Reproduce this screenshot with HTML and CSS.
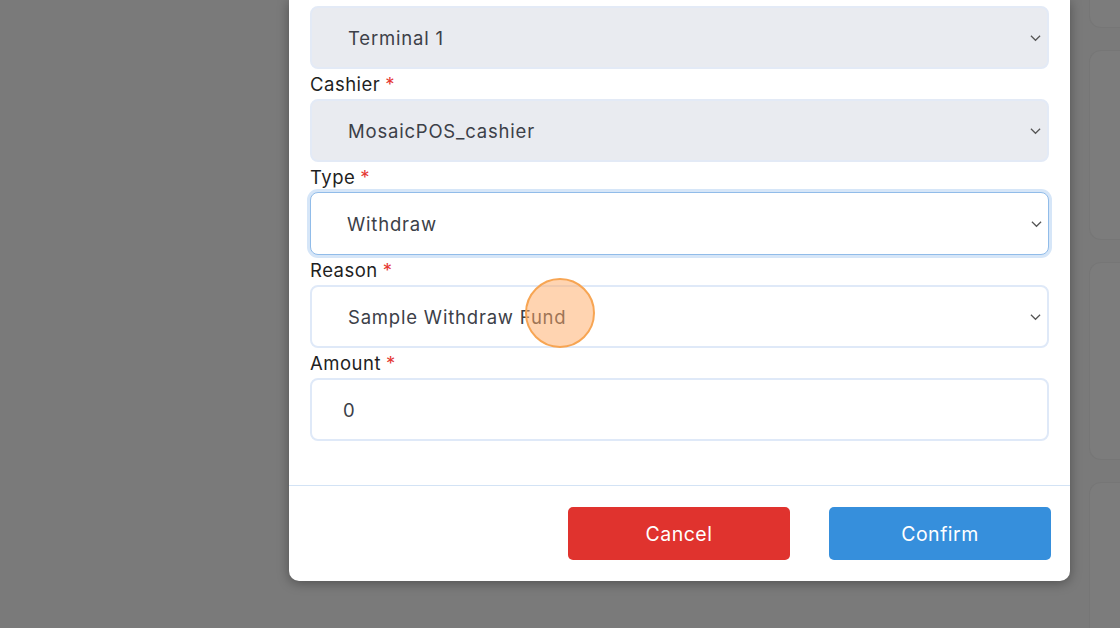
FILE: index.html
```html
<!DOCTYPE html>
<html lang="en">
<head>
  <meta charset="UTF-8">
  <title>Cash Movement</title>
  <link rel="stylesheet" href="styles.css">
</head>
<body>
  <div class="page">
    <div class="gutter"></div>

    <div class="modal">
      <div class="modal-body">
        <div class="field disabled">
          <span>Terminal 1</span>
          <svg class="chev" viewBox="0 0 12 8"><path d="M1 1.5l5 5 5-5"/></svg>
        </div>

        <div class="label">Cashier <span class="req">*</span></div>
        <div class="field disabled">
          <span>MosaicPOS_cashier</span>
          <svg class="chev" viewBox="0 0 12 8"><path d="M1 1.5l5 5 5-5"/></svg>
        </div>

        <div class="label">Type <span class="req">*</span></div>
        <div class="field focus">
          <span>Withdraw</span>
          <svg class="chev" viewBox="0 0 12 8"><path d="M1 1.5l5 5 5-5"/></svg>
        </div>

        <div class="label">Reason <span class="req">*</span></div>
        <div class="field">
          <span>Sample Withdraw Fund</span>
          <svg class="chev" viewBox="0 0 12 8"><path d="M1 1.5l5 5 5-5"/></svg>
          <div class="click-dot"></div>
        </div>

        <div class="label">Amount <span class="req">*</span></div>
        <div class="field input">
          <span>0</span>
        </div>
      </div>

      <div class="modal-footer">
        <button class="btn cancel">Cancel</button>
        <button class="btn confirm">Confirm</button>
      </div>
    </div>

    <div class="side">
      <div class="card c1"></div>
      <div class="card c2"></div>
      <div class="card c3"></div>
      <div class="card c4"></div>
    </div>
  </div>
</body>
</html>
```

FILE: styles.css
```css
html, body { margin: 0; height: 100%; }
body { background: #7a7a7a; font-family: Inter, "Noto Sans", sans-serif; overflow: hidden; }

.page { display: flex; align-items: flex-start; height: 628px; overflow: hidden; }
.gutter { width: 289px; flex: none; }

.modal {
  width: 781px;
  flex: none;
  background: #fff;
  border-radius: 0 0 10px 10px;
  box-shadow: 0 2px 12px rgba(0, 0, 0, 0.35);
}
.modal-body { padding: 6px 21px 44px 21px; display: flex; flex-direction: column; }

.label {
  height: 30px;
  display: flex;
  align-items: center;
  font-size: 18.5px;
  letter-spacing: 0.5px;
  color: #1f1f1f;
}
.req { color: #e53935; margin-left: 5px; }

.field {
  position: relative;
  height: 63px;
  box-sizing: border-box;
  display: flex;
  align-items: center;
  justify-content: space-between;
  padding: 0 6px 0 36px;
  border: 2px solid #dfe9f8;
  border-radius: 8px;
  background: #fff;
  font-size: 18.5px;
  letter-spacing: 0.8px;
  color: #3c4048;
}
.field.disabled { background: #e9ebf0; border-color: #e3eaf6; }
.field.focus { border: 1.5px solid #91bce9; box-shadow: 0 0 0 3px #d6e6f8; }
.field.input { padding-left: 31px; }
.chev { width: 11px; height: 8px; fill: none; stroke: #555; stroke-width: 1.3; }

.click-dot {
  position: absolute;
  left: 213px;
  top: -9px;
  width: 66px;
  height: 66px;
  border-radius: 50%;
  border: 2px solid #f7a553;
  background: rgba(255, 170, 100, 0.5);
}

.modal-footer {
  border-top: 1px solid #d3e3f5;
  display: flex;
  justify-content: flex-end;
  gap: 39px;
  padding: 21px 19px 21px 0;
}
.btn {
  width: 222px;
  height: 53px;
  border: none;
  border-radius: 5px;
  color: #fff;
  font-family: Inter, "Noto Sans", sans-serif;
  font-size: 19.5px;
  letter-spacing: 0.5px;
}
.cancel { background: #e0332e; }
.confirm { background: #368fdc; }

.side { margin-left: 19px; flex: 1; display: flex; flex-direction: column; gap: 22px; margin-top: -40px; }
.card {
  background: #7c7c7c;
  border: 1px solid #767676;
  border-right: none;
  border-radius: 12px 0 0 12px;
}
.c1 { height: 66px; }
.c2 { height: 188px; }
.c3 { height: 196px; }
.c4 { height: 200px; }
```
